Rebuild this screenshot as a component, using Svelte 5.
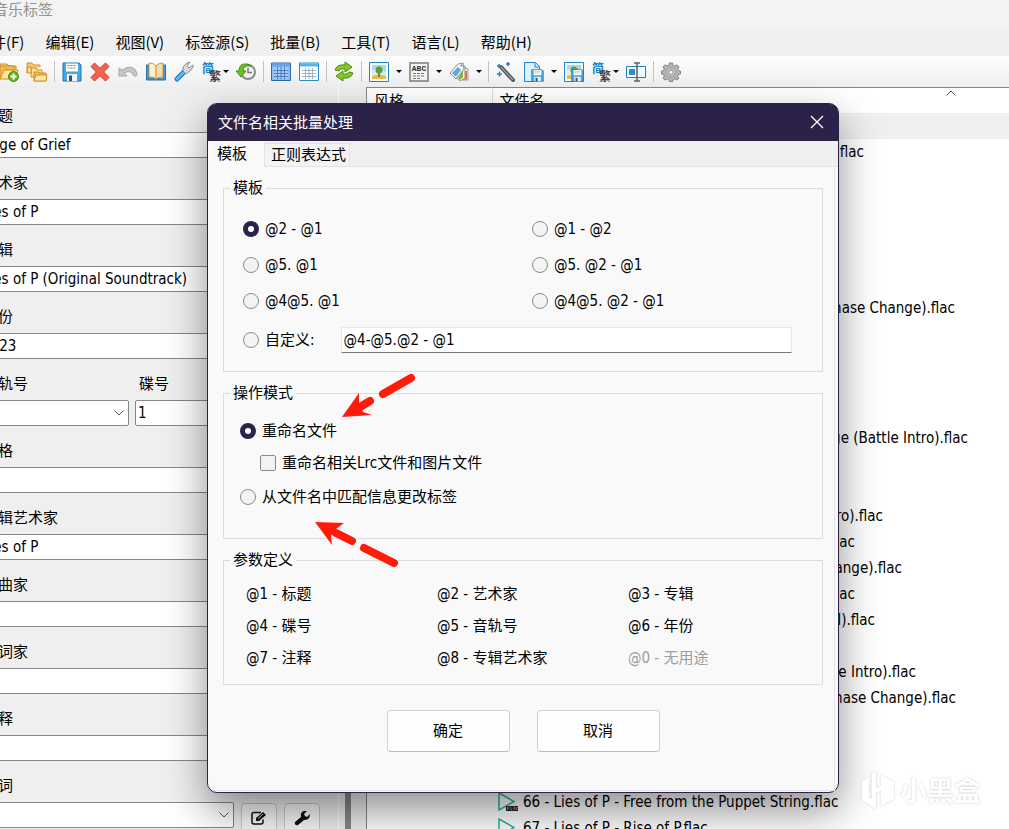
<script lang="ts">
  type Tool = { icon: string; label: string; menu?: boolean };
  type Track = { name: string; width?: number };

  const menus = ["文件(F)", "编辑(E)", "视图(V)", "标签源(S)", "批量(B)", "工具(T)", "语言(L)", "帮助(H)"];

  const toolGroups: Tool[][] = [
    [
      { icon: "folder-add", label: "添加目录" },
      { icon: "folders", label: "更改目录" },
    ],
    [
      { icon: "save", label: "保存" },
      { icon: "delete", label: "删除" },
      { icon: "undo", label: "撤销" },
      { icon: "book", label: "标签" },
      { icon: "wrench", label: "工具" },
      { icon: "hans", label: "简繁转换", menu: true },
      { icon: "history", label: "历史" },
    ],
    [
      { icon: "grid-on", label: "全选" },
      { icon: "grid", label: "反选" },
    ],
    [{ icon: "refresh", label: "刷新" }],
    [
      { icon: "image", label: "封面", menu: true },
      { icon: "abc", label: "歌词", menu: true },
      { icon: "tags", label: "标签源", menu: true },
    ],
    [
      { icon: "wand", label: "自动匹配" },
      { icon: "doc-save", label: "导出歌词", menu: true },
      { icon: "image-save", label: "导出封面" },
      { icon: "hans", label: "批量简繁转换", menu: true },
      { icon: "rename", label: "重命名" },
    ],
    [{ icon: "gear", label: "设置" }],
  ];

  const fields = [
    { id: "title", label: "标题", value: "Rage of Grief" },
    { id: "artist", label: "艺术家", value: "Lies of P" },
    { id: "album", label: "专辑", value: "Lies of P (Original Soundtrack)" },
    { id: "year", label: "年份", value: "2023" },
    { id: "track", label: "音轨号", value: "" },
    { id: "genre", label: "风格", value: "" },
    { id: "album-artist", label: "专辑艺术家", value: "Lies of P" },
    { id: "composer", label: "作曲家", value: "" },
    { id: "lyricist", label: "作词家", value: "" },
    { id: "comment", label: "注释", value: "" },
  ];

  const tracks: Track[] = [
    { name: "" },
    { name: ".flac", width: 341 },
    { name: "" },
    { name: "" },
    { name: "" },
    { name: "" },
    { name: "" },
    { name: "(Phase Change).flac", width: 432 },
    { name: "" },
    { name: "" },
    { name: "" },
    { name: "" },
    { name: "Grudge (Battle Intro).flac", width: 445 },
    { name: "" },
    { name: "" },
    { name: "(Intro).flac", width: 360 },
    { name: ".flac", width: 332 },
    { name: "Change).flac", width: 379 },
    { name: ".flac", width: 332 },
    { name: "(Vocal).flac", width: 352 },
    { name: "" },
    { name: "(Battle Intro).flac", width: 393 },
    { name: "(Phase Change).flac", width: 433 },
    { name: "" },
    { name: "" },
    { name: "" },
    { name: "66 - Lies of P - Free from the Puppet String.flac" },
    { name: "67 - Lies of P - Rise of P.flac" },
  ];

  const templates = ["@2 - @1", "@1 - @2", "@5. @1", "@5. @2 - @1", "@4@5. @1", "@4@5. @2 - @1"];

  const params = [
    "@1 - 标题", "@2 - 艺术家", "@3 - 专辑",
    "@4 - 碟号", "@5 - 音轨号", "@6 - 年份",
    "@7 - 注释", "@8 - 专辑艺术家", "@0 - 无用途",
  ];

  let template = $state("@2 - @1");
  let custom = $state("@4-@5.@2 - @1");
  let mode = $state("rename");
  let renameRelated = $state(false);
</script>

{#snippet floppy()}
  <path d="M1 1h16l2 2v16H1z" fill="#4aa8e0" stroke="#1c77b3" />
  <path d="M4 1.500h12v8H4z" fill="#fff" />
  <path d="M5.500 3.500h9M5.500 6h9" stroke="#77838c" stroke-dasharray="2 1" />
  <path d="M5 12h10v7H5z" fill="#eef4f8" />
  <path d="M7 13.500h3V19H7z" fill="#31546c" />
{/snippet}

{#snippet picture()}
  <path d="M.5.5h19v19H.5z" fill="#f5fbff" stroke="#2785bd" />
  <path d="M3 3h14v14H3z" fill="#a5d8f3" />
  <path d="M3 8q7-3 14 2v4H3z" fill="#d7eefa" />
  <path d="M3 14q7-3 14 0v3H3z" fill="#e2bd4a" />
  <path d="M9.300 10h1.400v5H9.300z" fill="#805021" />
  <circle cx="10" cy="8" r="3.500" fill="#5b9f32" />
{/snippet}

{#snippet icon(name: string)}
  <svg width="20" height="20" viewBox="0 0 20 20" fill="none" aria-hidden="true">
    {#if name === "folder-add"}
      <path d="M1 4V2h7l2 2h7v4" fill="#f8d476" stroke="#cb8e24" />
      <path d="M1 17V4h14v4H6z" fill="#eebd52" stroke="#cb8e24" />
      <path d="M5 8h14l-4 9H1z" fill="#ffe59d" stroke="#cb8e24" />
      <circle cx="14.500" cy="14.500" r="5" fill="#67b51f" stroke="#3f8b0c" />
      <path d="M14.500 11.500v6M11.500 14.500h6" stroke="#fff" stroke-width="2" />
    {:else if name === "folders"}
      <path d="M0 11V1h5l1 2h7v2" fill="#f5cc6f" stroke="#cb8e24" />
      <path d="M4 15V6h5l1 2h5v7z" fill="#ffe09a" stroke="#cb8e24" />
      <path d="M0 11l1-6h3v6z" fill="#ffe5a2" stroke="#cb8e24" />
      <path d="M7 19V10h5l1 1h6v8z" fill="#eebd52" stroke="#cb8e24" />
      <path d="M7 19l2-6h11l-1 6z" fill="#ffe5a2" stroke="#cb8e24" />
    {:else if name === "save"}
      {@render floppy()}
    {:else if name === "delete"}
      <path d="M4.500 1L10 6.300 15.500 1 19 4.500 13.700 10 19 15.500 15.500 19 10 13.700 4.500 19 1 15.500 6.300 10 1 4.500z" fill="#f0644e" stroke="#d6392b" stroke-linejoin="round" />
    {:else if name === "undo"}
      <path d="M1 6v8h8l-3-3q7-4 10 3 3 1 3-3Q15 1 4 8z" fill="#c5c7c8" stroke="#a6a8aa" stroke-linejoin="round" />
    {:else if name === "book"}
      <path d="M.5 3H3v13h7l7 1V3h2.500v15H.5z" fill="#4797cf" stroke="#2776ae" />
      <path d="M3 1q5 0 7 3v13q-3-3-7-2z" fill="#fff0cc" stroke="#c99b51" />
      <path d="M17 1q-5 0-7 3v13q3-3 7-2z" fill="#f5dda9" stroke="#c99b51" />
    {:else if name === "wrench"}
      <path d="M3 17l7-7" stroke="#1674b4" stroke-width="5" stroke-linecap="round" />
      <path d="M3 17l7-7" stroke="#5db7ed" stroke-width="3" stroke-linecap="round" />
      <path d="M9 9l3 3 4-3 3-4v-2l-4 3-2-2 3-4-3 1-4 4z" fill="#d6dadd" stroke="#858c92" stroke-linejoin="round" />
    {:else if name === "hans"}
      <text x="0" y="11" font-size="12" fill="#1683c2" font-weight="bold">简</text>
      <text x="7" y="19" font-size="12" fill="#444" font-weight="bold">繁</text>
    {:else if name === "history"}
      <circle cx="12" cy="10" r="7" fill="#f1f1f1" stroke="#8b8d8e" stroke-width="2" />
      <path d="M12 6v4.500h4" stroke="#777" stroke-width="1.500" />
      <path d="M3 9Q3 1 11 2q3 0 4 2-8-1-8 5h3l-5 6-5-6z" fill="#74bd28" stroke="#438e0f" />
    {:else if name === "grid-on"}
      <path d="M.5 1h19v17.500H.5z" fill="#8dbdf0" stroke="#2f69ab" />
      <path d="M1 1.500h18v3H1z" fill="#6aa4e4" />
      <path d="M3 5.500h14v11H3z" fill="#a9cdf5" />
      <path d="M3 8.500h14M3 11.500h14M3 14.500h14M6.500 5v12M10 5v12M13.500 5v12" stroke="#477fc0" />
    {:else if name === "grid"}
      <path d="M.5 1h19v17.500H.5z" fill="#fff" stroke="#2a8cc8" />
      <path d="M1 1.500h18v3H1z" fill="#56b4ea" />
      <path d="M3 8.500h14M3 11.500h14M3 14.500h14M6.500 6v11M10 6v11M13.500 6v11" stroke="#9bb3c3" />
    {:else if name === "refresh"}
      <path d="M1 8q2-6 10-5V0l7 5-7 5V7q-5-1-6 2z" fill="#84c62c" stroke="#478f0e" stroke-linejoin="round" />
      <path d="M19 11q-2 6-10 5v3l-7-5 7-5v3q5 1 6-2z" fill="#84c62c" stroke="#478f0e" stroke-linejoin="round" />
    {:else if name === "image"}
      {@render picture()}
    {:else if name === "abc"}
      <path d="M1 1h18v18H1z" fill="#f3f3f3" stroke="#999" stroke-width="2" />
      <text class="abc" x="10" y="9" font-size="8" fill="#333" text-anchor="middle" font-weight="bold">ABC</text>
      <path d="M4 11.500h12M4 14h12M4 16.500h8" stroke="#777" stroke-dasharray="3 1" />
    {:else if name === "tags"}
      <path d="M14 5l5 2v11h-6z" fill="#f4f4f4" stroke="#9a9a9a" />
      <path d="M16 9h2v8l-4 1z" fill="#e86837" />
      <path d="M11 5l5-1v12l-5 3-4-4z" fill="#f4f4f4" stroke="#9a9a9a" />
      <path d="M14 8v7l-3 3-2-2z" fill="#80b83c" />
      <path d="M1 11L9 2l5-1 1 6-8 10z" fill="#f6f7f8" stroke="#8b9298" />
      <path d="M3 11l6-6 3 3-5 7z" fill="#5dacdf" />
      <circle cx="12.500" cy="3.500" r="1" fill="#66717a" />
    {:else if name === "wand"}
      <path d="M5 5l12 13" stroke="#4b5157" stroke-width="4" stroke-linecap="round" />
      <path d="M5 5l12 13" stroke="#9aa0a6" stroke-width="1.500" />
      <path d="M1 4h4M3 2v4M10 2h4M12 0v4M1 12h5M3.500 9.500v5" stroke="#3879c5" stroke-width="1.500" />
    {:else if name === "doc-save"}
      <path d="M.5.5h11l4 4v15H.5z" fill="#d9f2ff" stroke="#2786be" />
      <path d="M11 1v4h4" stroke="#2786be" />
      <g transform="translate(7 7) scale(.65)">{@render floppy()}</g>
    {:else if name === "image-save"}
      {@render picture()}
      <g transform="translate(7 7) scale(.65)">{@render floppy()}</g>
    {:else if name === "rename"}
      <path d="M.5 4.500h19v11H.5z" fill="#f6fcff" stroke="#1c83c5" />
      <path d="M3 7h6v6H3z" fill="#348fc8" />
      <path d="M11 1v18M8 1h6M8 19h6" stroke="#596269" stroke-width="1.500" />
    {:else if name === "gear"}
      <path d="M8.300 1h3.400l.5 2.400 1.700.7L16 2.800 18 5l-1.300 2 .6 1.500 2.200.5v3l-2.300.5-.7 1.700L18 16.200 16 18l-2.200-1.200-1.600.7-.5 2H8.300l-.5-2-1.600-.7L4 18l-2-1.800 1.400-2-.6-1.700L.5 12V9l2.300-.5L3.400 7 2 5l2-2.200L6.100 4l1.700-.6z" fill="#b4b4b4" stroke="#858585" />
      <circle cx="10" cy="10.300" r="4.500" fill="#ccc" stroke="#999" />
      <circle cx="10" cy="10.300" r="2.200" fill="#f5f5f5" stroke="#858585" />
    {/if}
  </svg>
{/snippet}

{#snippet chevron()}
  <svg class="chevron" width="10" height="6" viewBox="0 0 10 6" fill="none" aria-hidden="true">
    <path d="M.5.5L5 5 9.500.5" stroke="#555" />
  </svg>
{/snippet}

<div class="app">
  <header class="window-title">音乐标签</header>

  <nav class="menubar">
    {#each menus as item}
      <button>{item}</button>
    {/each}
  </nav>

  <div class="toolbar">
    {#each toolGroups as group, i}
      {#if i > 0}<span class="sep"></span>{/if}
      {#each group as tool}
        <button class="tool" class:has-menu={tool.menu} class:tight={tool.icon === "hans"} aria-label={tool.label}>
          {@render icon(tool.icon)}
          {#if tool.menu}<i class="caret"></i>{/if}
        </button>
      {/each}
    {/each}
  </div>

  <main class="workspace">
    <section class="editor">
      {#each fields as field}
        {#if field.id === "track"}
          <div class="field-pair">
            <div class="field track">
              <label for="track">音轨号</label>
              <div class="select-wrap">
                <select id="track"><option></option></select>
                {@render chevron()}
              </div>
            </div>
            <div class="field disc">
              <label for="disc">碟号</label>
              <input id="disc" type="text" value="1" />
            </div>
          </div>
        {:else}
          <div class="field">
            <label for={field.id}>{field.label}</label>
            <input id={field.id} type="text" value={field.value} />
          </div>
        {/if}
      {/each}
      <div class="field">
        <label for="lyrics">歌词</label>
        <div class="lyrics-row">
          <div class="select-wrap">
            <select id="lyrics"><option></option></select>
            {@render chevron()}
          </div>
          <button class="small-button" aria-label="编辑歌词">
            <svg width="16" height="14" viewBox="0 0 16 14" fill="none" aria-hidden="true">
              <path d="M10 1.500H3Q1 1.500 1 3.500V11q0 2 2 2h7q2 0 2-2V8.500" stroke="#111" stroke-width="1.500" />
              <path d="M5 10V7l7-6 3 3-7 6z" fill="#111" />
              <path d="M7 7.500l5-4.500" stroke="#ccc" />
            </svg>
          </button>
          <button class="small-button" aria-label="歌词工具">
            <svg width="16" height="16" viewBox="0 0 16 16" aria-hidden="true">
              <path d="M1 12l6-5Q6 2 10 1l3 0-3 3 1 2 2 1 3-3q0 6-6 6L4 15q-2 1-3-1-.5-1 0-2z" fill="#111" />
            </svg>
          </button>
        </div>
      </div>
    </section>

    <div class="scroll-track"><span class="scroll-thumb"></span></div>

    <section class="list">
      <table>
        <thead>
          <tr>
            <th class="col-genre">风格</th>
            <th class="col-file">
              文件名
              <svg class="sort" width="10" height="6" viewBox="0 0 10 6" fill="none" aria-hidden="true">
                <path d="M.5 5.500L5 1l4.500 4.500" stroke="#555" />
              </svg>
            </th>
          </tr>
        </thead>
        <tbody>
          {#each tracks as track, i}
            <tr class:selected={i === 0}>
              <td></td>
              <td>
                <div class="file">
                  <svg width="20" height="20" viewBox="0 0 20 20" fill="none" aria-hidden="true">
                    <path d="M1 1v17L16 9.500z" stroke="#20b79a" stroke-width="1.500" />
                    <path d="M8 14h12v5H8z" fill="#222" />
                    <path d="M9.500 18v-3h2m-2 1.500h1.500M13 15v3h1.500M16 18v-3h1v3M20 15.500h-1.500v2H20" stroke="#bbb" stroke-width=".6" />
                  </svg>
                  <span class="file-name" style:width={track.width ? `${track.width}px` : "auto"}>{track.name}</span>
                </div>
              </td>
            </tr>
          {/each}
        </tbody>
      </table>
    </section>
  </main>

  <div class="watermark">
    <svg width="34" height="40" viewBox="0 0 34 40" aria-hidden="true">
      <path d="M15 1v17l5-2V5l13 7v17l-13 7V21l-5 2v16L1 30V11l7-4v20l3 2V3z" />
    </svg>
    <span>小黑盒</span>
  </div>

  <div class="dialog" role="dialog" aria-labelledby="dialog-title">
    <div class="dialog-title">
      <span id="dialog-title">文件名相关批量处理</span>
      <button class="close" aria-label="关闭">
        <svg width="14" height="14" viewBox="0 0 14 14" aria-hidden="true">
          <path d="M1 1l12 12M13 1L1 13" stroke="#fff" stroke-width="1.300" />
        </svg>
      </button>
    </div>

    <div class="tabs" role="tablist">
      <button class="tab active" role="tab" aria-selected="true">模板</button>
      <button class="tab" role="tab" aria-selected="false">正则表达式</button>
    </div>

    <div class="panel">
      <fieldset>
        <legend>模板</legend>
        <div class="templates">
          <div class="template-grid">
            {#each templates as item}
              <label><input type="radio" name="template" value={item} bind:group={template} />{item}</label>
            {/each}
          </div>
          <div class="custom-row">
            <label><input type="radio" name="template" value="custom" bind:group={template} />自定义:</label>
            <input class="custom-input" type="text" aria-label="自定义" bind:value={custom} />
          </div>
        </div>
      </fieldset>

      <fieldset>
        <legend>操作模式</legend>
        <div class="modes">
          <label><input type="radio" name="mode" value="rename" bind:group={mode} />重命名文件</label>
          <label class="nested"><input type="checkbox" bind:checked={renameRelated} />重命名相关Lrc文件和图片文件</label>
          <label class="last"><input type="radio" name="mode" value="tag" bind:group={mode} />从文件名中匹配信息更改标签</label>
        </div>
      </fieldset>

      <fieldset>
        <legend>参数定义</legend>
        <div class="params">
          {#each params as param}
            <span class:unused={param.startsWith("@0")}>{param}</span>
          {/each}
        </div>
      </fieldset>

      <div class="actions">
        <button>确定</button>
        <button>取消</button>
      </div>
    </div>

    <!-- hand-drawn pointers to the two modes -->
    <svg class="pointers" width="110" height="200" viewBox="310 370 110 200" aria-hidden="true">
      <g stroke="#ff1a0a" stroke-width="8" stroke-linecap="round">
        <path d="M411 378l-28 16M370 401l-10 6M394 563l-30-15M352 541l-16-8" />
      </g>
      <g fill="#ff1a0a">
        <path d="M342 417l17-24v10l4 9 9 3z" />
        <path d="M315 522l29 1-8 6-5 7 1 9z" />
      </g>
    </svg>
  </div>
</div>

<style>
  :global(body) {
    margin: 0;
    overflow: hidden;
    background: #f0f0f0;
  }

  .app {
    --ui: "DejaVu Sans Condensed", "Noto Sans", "Noto Sans CJK SC", sans-serif;
    --line: #868686;
    position: relative;
    display: flex;
    flex-direction: column;
    height: 100vh;
    /* the window hangs off the left side of the screen */
    margin-left: -40px;
    overflow: hidden;
    color: #000;
    font-family: var(--ui);
    font-size: 15px;
    line-height: 20px;
  }

  .app * {
    box-sizing: border-box;
  }

  button {
    padding: 0;
    border: 0;
    background: none;
    color: inherit;
    font: inherit;
  }

  svg {
    flex: none;
  }

  .window-title,
  .menubar,
  .dialog-title {
    font-family: "Noto Sans CJK SC", sans-serif;
  }

  .window-title {
    flex: none;
    height: 28px;
    padding-left: 33px;
    background: #f3f3f3;
    color: #929292;
    line-height: 17px;
  }

  .menubar {
    display: flex;
    flex: none;
    align-items: center;
    gap: 21px;
    height: 28px;
    padding-left: 16px;
    background: #f0f0f0;
    white-space: nowrap;
  }

  .toolbar {
    display: flex;
    flex: none;
    align-items: center;
    height: 31px;
    padding-left: 35px;
    background: linear-gradient(#fdfdfd, #efefef);
  }

  .tool {
    display: flex;
    flex: none;
    align-items: center;
    width: 28px;
    padding-left: 4px;
  }

  .has-menu {
    gap: 7px;
    width: 40px;
  }

  .has-menu.tight {
    gap: 1px;
    width: 34px;
  }

  .tool svg {
    overflow: visible;
    font-family: "Noto Sans CJK SC", sans-serif;
  }

  .abc {
    font-family: "Liberation Mono", monospace;
  }

  .caret {
    border: 3px solid transparent;
    border-top-color: #000;
    border-bottom: 0;
  }

  .sep {
    flex: none;
    width: 1px;
    height: 21px;
    margin: 0 3px;
    background: #c4c4c4;
  }

  .workspace {
    display: flex;
    flex: 1;
    min-height: 0;
  }

  /* tag editor */
  .editor {
    flex: none;
    width: 379px;
    padding: 4px 18px 0 19px;
    border-right: 1px solid #fff;
    background: #efefef;
  }

  .field label {
    display: block;
    height: 41px;
    padding: 15px 4px 6px;
  }

  .field input,
  .field select {
    display: block;
    width: 100%;
    height: 26px;
    padding: 0 2px;
    border: 1px solid var(--line);
    border-radius: 2px;
    background: #fff;
    color: #000;
    font: inherit;
    appearance: none;
  }

  .field-pair {
    display: flex;
    gap: 6px;
  }

  .track {
    width: 150px;
  }

  .disc {
    flex: 1;
  }

  .select-wrap {
    position: relative;
    flex: 1;
  }

  .chevron {
    position: absolute;
    top: 10px;
    right: 5px;
  }

  .lyrics-row {
    display: flex;
  }

  .small-button {
    display: flex;
    align-items: center;
    justify-content: center;
    width: 36px;
    height: 29px;
    margin: 1px 0 0 7px;
    border: 1px solid #c9c9c9;
    border-radius: 4px;
    background: #f8f8f8;
  }

  .scroll-track {
    display: flex;
    flex: none;
    align-items: flex-end;
    justify-content: center;
    width: 27px;
    padding-right: 9px;
    background: #efefef;
  }

  .scroll-thumb {
    width: 6px;
    height: 70%;
    background: #888;
  }

  /* file list */
  .list {
    flex: 1;
    min-width: 0;
    overflow: hidden;
    border: solid #828790;
    border-width: 1px 0 0 1px;
    background: #fff;
  }

  table {
    width: 1042px;
    border-collapse: collapse;
    table-layout: fixed;
  }

  th {
    position: relative;
    height: 25px;
    padding: 0 7px;
    font-weight: normal;
    text-align: left;
  }

  .col-genre {
    width: 125px;
    border-right: 1px solid #ddd;
  }

  .sort {
    position: absolute;
    top: 2px;
    left: 453px;
  }

  td {
    height: 26px;
    padding: 0 6px;
  }

  .selected {
    background: #efefef;
  }

  .file {
    display: flex;
    align-items: center;
    gap: 5px;
  }

  .file-name {
    flex: none;
    text-align: right;
    white-space: nowrap;
  }

  .watermark {
    position: absolute;
    right: 28px;
    bottom: 19px;
    z-index: 2;
    display: flex;
    align-items: center;
    gap: 5px;
    color: #fff;
    fill: #fff;
    font: bold 27px/40px "Noto Sans CJK SC", sans-serif;
    filter: drop-shadow(0 0 1px #ccc);
  }

  /* batch dialog */
  .dialog {
    position: absolute;
    top: 103px;
    left: 247px;
    width: 632px;
    border: 1px solid #2b2149;
    border-radius: 10px;
    background: #f9f9f9;
    box-shadow: 0 18px 42px rgba(0, 0, 0, 0.44);
  }

  .dialog-title {
    display: flex;
    align-items: center;
    justify-content: space-between;
    height: 37px;
    padding: 0 14px 2px 10px;
    border-radius: 8px 8px 0 0;
    background: #2c2149;
    color: #fff;
  }

  .close {
    display: flex;
  }

  .tabs {
    display: flex;
    height: 26px;
    background: #efefef;
    box-shadow: inset 0 -1px #e3e3e3;
  }

  .tab {
    height: 24px;
    margin-top: 2px;
    padding: 0 3px 0 6px;
    border: 1px solid #e3e3e3;
    border-left: 0;
    background: #f3f3f3;
  }

  .tab.active {
    width: 57px;
    height: 26px;
    margin: 0;
    padding: 0 0 0 9px;
    border-width: 0 1px 0 0;
    background: #f9f9f9;
    text-align: left;
  }

  .panel {
    margin: 0 3px 1px 0;
    padding: 11px 11px 38px 15px;
    border: solid #e5e5e5;
    border-width: 0 1px 1px 0;
    border-radius: 0 0 0 8px;
  }

  fieldset {
    min-width: 0;
    margin: 0 0 11px;
    padding: 0;
    border: 1px solid #dcdcdc;
  }

  legend {
    height: 20px;
    margin-left: 6px;
    padding: 0 3px;
  }

  fieldset label {
    display: flex;
    align-items: center;
    gap: 6px;
  }

  input[type="radio"],
  input[type="checkbox"] {
    flex: none;
    width: 16px;
    height: 16px;
    margin: 0;
    border: 1px solid #8b8b8b;
    border-radius: 50%;
    background: #f3f3f3;
    appearance: none;
  }

  input[type="radio"]:checked {
    border: 5px solid #2b2149;
    background: #fff;
  }

  input[type="checkbox"] {
    border-radius: 2px;
  }

  input[type="checkbox"]:checked {
    background: #2b2149;
  }

  .templates {
    padding: 13px 30px 18px 19px;
  }

  .template-grid {
    display: grid;
    grid-template-columns: 289px 1fr;
    grid-auto-rows: 36px;
  }

  .custom-row {
    display: flex;
    gap: 26px;
    margin-top: 8px;
  }

  .custom-input {
    flex: 1;
    min-width: 0;
    height: 26px;
    padding: 0 2px;
    border: 1px solid #e8e8e8;
    border-bottom-color: #777;
    border-radius: 1px;
    background: #fff;
    color: #000;
    font: inherit;
  }

  .modes {
    padding: 12px 16px 23px;
  }

  .modes label {
    height: 32px;
  }

  .modes .nested {
    padding-left: 20px;
  }

  .modes .last {
    height: 36px;
  }

  .params {
    display: grid;
    grid-template-columns: repeat(3, 191px);
    grid-auto-rows: 32px;
    align-items: center;
    padding: 8px 2px 10px 22px;
  }

  .unused {
    color: #9d9d9d;
  }

  .actions {
    display: flex;
    justify-content: center;
    gap: 27px;
    padding-top: 14px;
  }

  .actions button {
    width: 123px;
    height: 42px;
    border: 1px solid #d0d0d0;
    border-bottom-color: #bbb;
    border-radius: 4px;
    background: #fefefe;
  }

  .pointers {
    position: absolute;
    top: 266px;
    left: 102px;
    pointer-events: none;
  }
</style>
